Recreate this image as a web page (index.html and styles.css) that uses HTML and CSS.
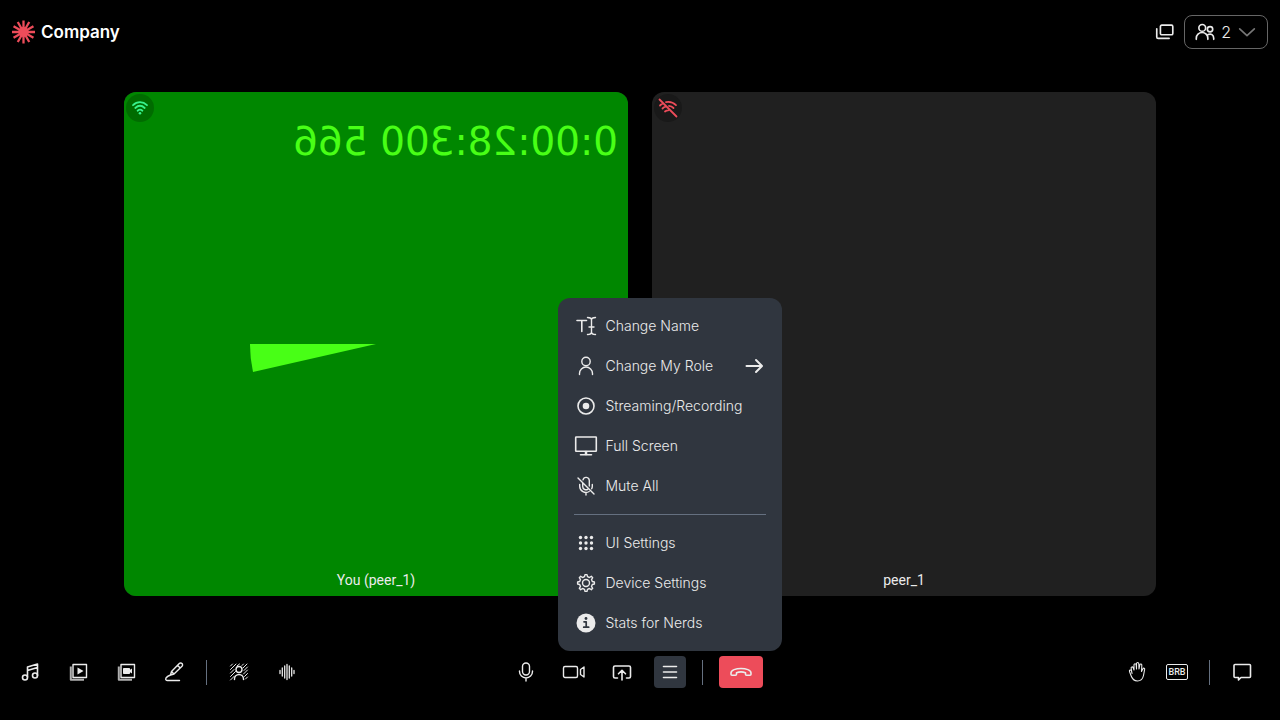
FILE: index.html
```html
<!DOCTYPE html>
<html lang="en">
<head>
<meta charset="utf-8">
<meta name="viewport" content="width=device-width, initial-scale=1">
<title>Company meeting</title>
<link rel="stylesheet" href="styles.css">
</head>
<body>
<div class="app">
  <header class="header">
    <a class="brand" href="#">
      <svg class="brand-mark" width="24" height="24" viewBox="0 0 24 24" aria-hidden="true">
        <g stroke="#ed4c5a" stroke-width="2.300"><path d="M11.500 .5v23M0 12h23M5.750 2.040l11.500 19.920M17.250 2.040L5.750 21.960M1.540 6.250l19.920 11.500M21.460 6.250L1.540 17.750"/></g>
        <circle cx="11.500" cy="12" r="5" fill="#ed4c5a"/>
      </svg>
      <span>Company</span>
    </a>
    <div class="header-actions">
      <button class="plain" aria-label="Picture in picture">
        <svg class="icon" viewBox="0 0 24 24"><rect x="7" y="4.500" width="13.500" height="10.500" rx="1.500"/><path d="M3 8.500V17.500a1.500 1.500 0 0 0 1.500 1.500H16.500"/></svg>
      </button>
      <button class="peers" aria-label="Participants">
        <svg class="icon" viewBox="0 0 24 24"><circle cx="9" cy="7.500" r="3.700"/><circle cx="17.500" cy="9" r="2.900"/><path d="M2.500 20v-1.200a6.300 6.300 0 0 1 12.600 0V20M15.500 14.800c3-1.500 6 .5 6 4V20"/></svg>
        <span>2</span>
        <svg class="icon chevron" viewBox="0 0 24 24"><path d="M4 8.500l8 7.500 8-7.500"/></svg>
      </button>
    </div>
  </header>

  <main class="stage">
    <section class="tile tile-local">
      <svg class="video" viewBox="0 0 504 504" aria-hidden="true">
        <rect width="504" height="504" fill="#008700"/>
        <text class="clock" x="10" y="63">0:00:28:300 566</text>
        <path fill="#48ff16" d="M252 252h126a126 126 0 0 1-3 28z"/>
      </svg>
      <span class="network good"><svg viewBox="0 0 18 18"><path d="M2 6.200c4.100-4 9.900-4 14 0M4.300 9c2.900-2.700 6.500-2.700 9.400 0M6.600 11.700c1.500-1.300 3.300-1.300 4.800 0"/><circle cx="9" cy="14.200" r="1.300" fill="currentColor" stroke="none"/></svg></span>
      <span class="name">You (peer_1)</span>
    </section>
    <section class="tile">
      <span class="network bad"><svg viewBox="0 0 20 20"><path d="M1.500 1.500l17 17M8 4.200c3.700-.7 7.300.3 10 3M2 7.500c.9-.9 1.900-1.600 3-2.100M11 7.800c1.800.2 3.300 1 4.500 2.200M4.500 10.500c.9-.9 2-1.500 3.200-1.800M7 13.500c1-.8 2-1.200 3.300-1.200"/></svg></span>
      <span class="name">peer_1</span>
    </section>
  </main>

  <footer class="footer">
    <div class="group">
      <button class="tool" aria-label="Play music"><svg class="icon" viewBox="0 0 24 24"><path d="M9.500 17V7L19.500 4v11.500M9.500 10.500l10-3"/><circle cx="7" cy="17.500" r="2.500"/><circle cx="17" cy="15.500" r="2.500"/></svg></button>
      <button class="tool" aria-label="Share playlist"><svg class="icon thin" viewBox="0 0 24 24"><rect x="7" y="4.500" width="13.500" height="13"/><path class="back" d="M4.800 6.500v13.300H18"/><path fill="currentColor" stroke="none" d="M11.500 7.500l6 3.500-6 3.500z"/></svg></button>
      <button class="tool" aria-label="Share video playlist"><svg class="icon thin" viewBox="0 0 24 24"><rect x="7" y="4.500" width="13.500" height="13"/><path class="back" d="M4.800 6.500v13.300H18"/><path fill="currentColor" stroke="none" d="M10 8h5c.6 0 1 .4 1 1v.8L18 8.500v5l-2-1.300v.8c0 .6-.4 1-1 1h-5c-.6 0-1-.4-1-1V9c0-.6.4-1 1-1z"/></svg></button>
      <button class="tool" aria-label="Whiteboard"><svg class="icon thin" viewBox="0 0 24 24"><path d="M20 3.600a1.900 1.900 0 0 0-2.700 0L9.500 11.500l-1 3.500 3.500-1 8-7.700a1.900 1.900 0 0 0 0-2.700zM15.500 5.300l2.700 2.700M9.500 11.500L12 14M8.500 15c-1.700.7-3.500 1.500-4.500 3-.9 1.500.2 2.500 1.500 2.500h12"/></svg></button>
      <span class="divider"></span>
      <button class="tool" aria-label="Virtual background"><svg class="icon thin" viewBox="0 0 24 24"><g stroke-width="1"><path d="M3.500 6l2-2M3.500 9.500l5.500-5.500M3.500 13L7 9.500M3.500 16.500l5-5M3.500 20l4-4M10 6l2.500-2M15 5.500L16.500 4M16 8l4-4M17 10.500L20.500 7M16.500 14l4-4M17.500 16.500l3-3M18.500 19l2-2"/></g><circle cx="12" cy="9.500" r="3"/><path d="M7.500 19.500v-.5a4.500 4.500 0 0 1 9 0v.5"/></svg></button>
      <button class="tool" aria-label="Noise suppression"><svg class="icon" viewBox="0 0 24 24"><path stroke-width="1.300" d="M5 10.500v3M7.300 8v8M9.700 6v12M12 4.500v15M14.300 6v12M16.700 8v8M19 10.500v3"/></svg></button>
    </div>

    <div class="group">
      <button class="tool" aria-label="Microphone"><svg class="icon thin" viewBox="0 0 24 24"><rect x="8.500" y="3" width="7" height="12" rx="3.500"/><path d="M5.500 11v.5a6.500 6.500 0 0 0 13 0V11M12 18v3"/></svg></button>
      <button class="tool" aria-label="Camera"><svg class="icon thin" viewBox="0 0 24 24"><rect x="1.500" y="6.500" width="14" height="11" rx="1.500"/><path d="M18.500 9.500l3.500-2.500v10l-3.500-2.500z"/></svg></button>
      <button class="tool" aria-label="Share screen"><svg class="icon" viewBox="0 0 24 24"><path d="M7.500 18H5a1.500 1.500 0 0 1-1.500-1.500v-9A1.500 1.500 0 0 1 5 6h14a1.500 1.500 0 0 1 1.500 1.500v9A1.500 1.500 0 0 1 19 18h-2.500M12 20v-9M8.500 13.800L12 10.300l3.500 3.500"/></svg></button>
      <div class="menu-anchor">
        <button class="tool active" aria-label="More" aria-expanded="true"><svg class="icon" viewBox="0 0 24 24"><path d="M5.500 6.500h13M5.500 12h13M5.500 17.500h13"/></svg></button>
        <div class="menu" role="menu">
          <button class="item" role="menuitem"><svg class="icon" viewBox="0 0 24 24"><path d="M3 6.500h9.500M7.800 6.500v11"/><path class="fine" d="M13.500 3.500c2.500 0 4 .7 4 2.500v12c0 1.800-1.500 2.500-4 2.500M21.500 3.500c-2.500 0-4 .7-4 2.500M21.500 20.500c-2.500 0-4-.7-4-2.500M15 13h5"/></svg><span>Change Name</span></button>
          <button class="item" role="menuitem"><svg class="icon thin" viewBox="0 0 24 24"><circle cx="12" cy="7.500" r="4.200"/><path d="M5.500 20.500v-1a6.500 6.500 0 0 1 13 0v1"/></svg><span>Change My Role</span><svg class="icon next" viewBox="0 0 24 24"><path d="M4.500 12h15M14 6l6 6-6 6"/></svg></button>
          <button class="item" role="menuitem"><svg class="icon" viewBox="0 0 24 24"><circle cx="12" cy="12" r="8"/><circle cx="12" cy="12" r="3.300" fill="currentColor" stroke="none"/></svg><span>Streaming/Recording</span></button>
          <button class="item" role="menuitem"><svg class="icon" viewBox="0 0 24 24"><rect x="1.700" y="3" width="20.600" height="14.300" rx=".5"/><path d="M12 17.500v3M6.500 20.700h11"/><path stroke-width="2.500" d="M12 18.500v1.500"/></svg><span>Full Screen</span></button>
          <button class="item" role="menuitem"><svg class="icon thin" viewBox="0 0 24 24"><path d="M4 4l16 16M9 5.800A3.200 3.200 0 0 1 15.300 6.500v5.500M8.700 9v3.500a3.300 3.300 0 0 0 5 2.800M5.700 10.500v1.700a6.300 6.300 0 0 0 9.500 5.300M18.300 10.500v1.700c0 .9-.2 1.700-.6 2.500M12 18.500V21"/></svg><span>Mute All</span></button>
          <hr class="rule">
          <button class="item" role="menuitem"><svg class="icon" viewBox="0 0 24 24"><g fill="currentColor" stroke="none"><circle cx="6.500" cy="6.500" r="1.700"/><circle cx="12" cy="6.500" r="1.700"/><circle cx="17.500" cy="6.500" r="1.700"/><circle cx="6.500" cy="12" r="1.700"/><circle cx="12" cy="12" r="1.700"/><circle cx="17.500" cy="12" r="1.700"/><circle cx="6.500" cy="17.500" r="1.700"/><circle cx="12" cy="17.500" r="1.700"/><circle cx="17.500" cy="17.500" r="1.700"/></g></svg><span>UI Settings</span></button>
          <button class="item" role="menuitem"><svg class="icon thin" viewBox="0 0 24 24"><circle cx="12" cy="12" r="3.500"/><path d="M10.500 5.700L11 3.600h2l.5 2.100 1.900.8 1.900-1.200 1.400 1.400-1.200 1.900.8 1.900 2.100.5v2l-2.100.5-.8 1.900 1.200 1.900-1.400 1.400-1.900-1.200-1.900.8-.5 2.100h-2l-.5-2.100-1.900-.8-1.900 1.200-1.400-1.400 1.200-1.900-.8-1.900-2.100-.5v-2l2.100-.5.8-1.900-1.200-1.900 1.400-1.400 1.900 1.200z"/></svg><span>Device Settings</span></button>
          <button class="item" role="menuitem"><svg class="icon" viewBox="0 0 24 24"><circle cx="12" cy="12" r="9.500" fill="currentColor" stroke="none"/><path stroke="#30363f" stroke-width="1.700" d="M10 10.800h2.200v5.200M9.700 16.200h5"/><circle cx="12" cy="7.500" r="1.400" fill="#30363f" stroke="none"/></svg><span>Stats for Nerds</span></button>
        </div>
      </div>
      <span class="divider"></span>
      <button class="tool leave" aria-label="Leave room"><svg class="icon" viewBox="0 0 24 24"><path d="M2 13c0-6 20-6 20 0v1.300c0 .6-.4 1-1 1h-3.500c-.6 0-1-.4-1-1V12.800c-2.500-1-6.500-1-9 0v1.500c0 .6-.4 1-1 1H3c-.6 0-1-.4-1-1z"/></svg></button>
    </div>

    <div class="group end">
      <div class="pair">
        <button class="tool" aria-label="Raise hand"><svg class="icon hand" viewBox="0 0 24 24"><path d="M7 13.500l-.8-5c-.5-1.700 1.400-2.200 2-.7L9 10V5c0-1.700 2-1.700 2.200 0l.3 4V3.800c0-1.700 2.200-1.700 2.300 0l.2 5.200.8-4c.3-1.500 2.200-1.200 2 .4l-.3 6.100 1.300-2.500c.6-1.500 2.300-.9 1.800.7L18.500 15.500c-.8 3.500-2.500 5.500-6 5.500-4 0-5.500-2.500-6.500-5.500l-1.500-4c-.5-1.400 1.200-2 1.900-.8z"/></svg></button>
        <button class="tool" aria-label="Be right back"><span class="brb">BRB</span></button>
      </div>
      <span class="divider"></span>
      <button class="tool" aria-label="Chat"><svg class="icon" viewBox="0 0 24 24"><path d="M5 4.500h14.500c.6 0 1 .4 1 1v11c0 .6-.4 1-1 1H11L8.500 20v-2.500H5c-.6 0-1-.4-1-1v-11c0-.6.4-1 1-1z"/></svg></button>
    </div>
  </footer>
</div>
</body>
</html>
```
FILE: styles.css
```css
* { box-sizing: border-box; }

body {
  margin: 0;
  background: #000;
  color: #ebebeb;
  font-family: Inter, "Liberation Sans", sans-serif;
}

button {
  margin: 0;
  padding: 0;
  border: 0;
  background: none;
  color: inherit;
  font: inherit;
  cursor: pointer;
}

.app {
  display: flex;
  flex-direction: column;
  height: 100vh;
}

.icon {
  display: block;
  flex: none;
  width: 24px;
  height: 24px;
  fill: none;
  stroke: currentColor;
  stroke-width: 1.6;
  stroke-linecap: round;
  stroke-linejoin: round;
}

.icon.thin { stroke-width: 1.4; }

.icon .fine { stroke-width: 1.4; }

.icon .back {
  stroke-width: 2;
  stroke-linecap: butt;
  opacity: 0.75;
}

.header {
  display: flex;
  align-items: center;
  justify-content: space-between;
  flex: none;
  min-height: 64px;
  padding: 0 12px;
}

.brand {
  display: flex;
  align-items: center;
  gap: 5px;
  color: #fff;
  font-size: 17px;
  font-weight: 600;
  text-decoration: none;
}

.header-actions {
  display: flex;
  align-items: center;
  gap: 8px;
}

.header .icon {
  width: 22px;
  height: 22px;
  stroke-width: 1.8;
}

.peers {
  display: flex;
  align-items: center;
  gap: 5px;
  height: 34px;
  padding: 0 9px;
  border: 1px solid #666;
  border-radius: 8px;
  font-size: 16px;
  font-weight: 300;
}

.chevron { color: #777; }

.stage {
  display: flex;
  flex: 1;
  justify-content: center;
  gap: 24px;
  min-height: 0;
  padding: 28px 24px;
}

.tile {
  position: relative;
  height: 100%;
  aspect-ratio: 1;
  overflow: hidden;
  border-radius: 12px;
  background: #202020;
}

.video {
  display: block;
  width: 100%;
  height: 100%;
  transform: scaleX(-1);
}

.clock {
  fill: #48ff16;
  font-family: "DejaVu Sans", sans-serif;
  font-size: 39px;
}

.network {
  position: absolute;
  top: 2px;
  left: 2px;
  display: grid;
  place-items: center;
  width: 28px;
  height: 28px;
  border-radius: 50%;
}

.network svg {
  width: 18px;
  height: 18px;
  fill: none;
  stroke: currentColor;
  stroke-width: 1.8;
  stroke-linecap: round;
}

.good { background: #006c00; color: #37f28d; }
.bad { background: #191919; color: #ed4c5a; }
.bad svg { width: 20px; height: 20px; }

.name {
  position: absolute;
  right: 0;
  bottom: 6px;
  left: 0;
  font-family: Roboto, sans-serif;
  font-size: 14px;
  line-height: 20px;
  text-align: center;
}

.footer {
  display: grid;
  grid-template-columns: 1fr auto 1fr;
  align-items: center;
  flex: none;
  min-height: 96px;
  padding: 0 22px 0 14px;
}

.group {
  display: flex;
  align-items: center;
  gap: 16px;
}

.end { justify-content: flex-end; }

.pair { display: flex; gap: 8px; }

.tool {
  display: grid;
  place-items: center;
  width: 32px;
  height: 32px;
  border-radius: 4px;
}

.tool .hand { stroke-width: 1.1; }

.tool.active { background: #30363f; }

.tool.leave {
  width: 44px;
  background: #ed4c5a;
}

.divider {
  width: 1px;
  height: 25px;
  background: #657080;
}

.brb {
  padding: 0 1px;
  border: 1px solid #ebebeb;
  border-radius: 2px;
  font-family: Roboto, sans-serif;
  font-size: 9px;
  font-weight: 500;
  line-height: 14px;
}

.menu-anchor { position: relative; }

.menu {
  position: absolute;
  bottom: calc(100% + 5px);
  left: 50%;
  width: 224px;
  padding: 8px 0;
  border-radius: 12px;
  background: #30363f;
  transform: translateX(-50%);
}

.item {
  display: flex;
  align-items: center;
  gap: 8px;
  width: 100%;
  height: 40px;
  padding: 0 16px;
  font-size: 14px;
  font-weight: 300;
  line-height: 20px;
  text-align: left;
  white-space: nowrap;
}

.next {
  margin-left: auto;
  stroke-width: 2;
}

.rule {
  height: 1px;
  margin: 8px 16px;
  border: 0;
  background: #657080;
}
```
